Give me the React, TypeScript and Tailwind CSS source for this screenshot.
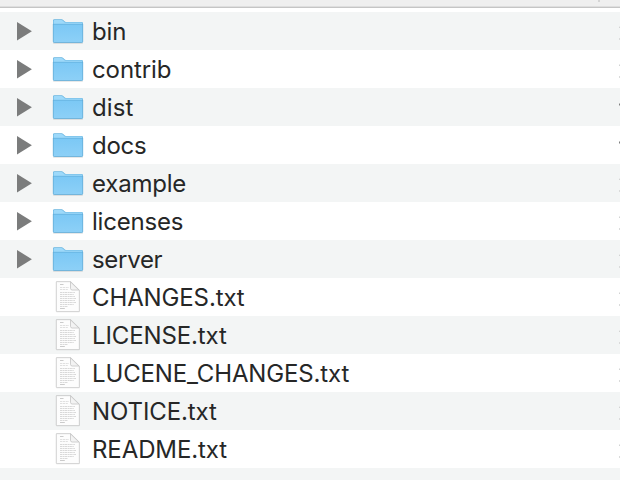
type Entry = { name: string; kind: 'folder' | 'file'; tracking: string; edge: 'curve' | 'flag' };

const entries: Entry[] = [
  { name: 'bin', kind: 'folder', tracking: 'tracking-[-0.1px]', edge: 'curve' },
  { name: 'contrib', kind: 'folder', tracking: 'tracking-[-0.1px]', edge: 'curve' },
  { name: 'dist', kind: 'folder', tracking: 'tracking-[0.1px]', edge: 'flag' },
  { name: 'docs', kind: 'folder', tracking: 'tracking-[-0.3px]', edge: 'flag' },
  { name: 'example', kind: 'folder', tracking: 'tracking-[-0.2px]', edge: 'curve' },
  { name: 'licenses', kind: 'folder', tracking: 'tracking-[-0.2px]', edge: 'curve' },
  { name: 'server', kind: 'folder', tracking: 'tracking-[-0.3px]', edge: 'curve' },
  { name: 'CHANGES.txt', kind: 'file', tracking: 'tracking-[-0.12px]', edge: 'curve' },
  { name: 'LICENSE.txt', kind: 'file', tracking: 'tracking-[-0.12px]', edge: 'curve' },
  { name: 'LUCENE_CHANGES.txt', kind: 'file', tracking: 'tracking-[-0.15px]', edge: 'curve' },
  { name: 'NOTICE.txt', kind: 'file', tracking: 'tracking-[-0.1px]', edge: 'curve' },
  { name: 'README.txt', kind: 'file', tracking: 'tracking-[-0.1px]', edge: 'curve' },
];

function Disclosure() {
  return (
    <svg width="16" height="20" viewBox="0 0 16 20" aria-hidden="true">
      <path d="M1 1v18.500L15.900 10.200z" fill="#7b7c7c" />
    </svg>
  );
}

function FolderIcon() {
  return (
    <svg width="32" height="38" viewBox="0 0 32 38" aria-hidden="true">
      <defs>
        <linearGradient id="folder-front" x1="0" y1="0" x2="0" y2="1">
          <stop offset="0" stopColor="#7bc8f5" />
          <stop offset="1" stopColor="#8dd0f7" />
        </linearGradient>
      </defs>
      <path d="M1.200 30h29.600v1.700H1.200z" fill="#000" opacity=".13" />
      <path d="M1 12V8.600Q1 7.200 2.400 7.200H9.600Q10.500 7.200 11.200 8L12.500 9.300Q13 9.900 14 9.900H29.600Q31 9.900 31 11.300V29H1z" fill="#68b5e0" />
      <path d="M1.600 12V8.900Q1.600 7.900 2.600 7.900H9.500Q10.200 7.900 10.800 8.500L12.200 10Q12.800 10.600 13.800 10.600H29.400Q30.400 10.600 30.400 11.600V13H1.600z" fill="#9dd9fa" />
      <path d="M1 12H31V29.500Q31 30.800 29.700 30.800H2.300Q1 30.800 1 29.500z" fill="url(#folder-front)" />
      <path d="M1 12.300H31" stroke="#64b2df" strokeWidth=".8" />
      <path d="M1.300 12V29.400Q1.300 30.500 2.400 30.500H29.600Q30.700 30.500 30.700 29.400V12" fill="none" stroke="#60a9d2" strokeWidth=".7" />
    </svg>
  );
}

function FileIcon() {
  return (
    <svg width="26" height="38" viewBox="0 0 26 38" aria-hidden="true">
      <path d="M.8 4Q.8 3 1.800 3H15.500L25 12.300V33.200Q25 34.300 23.900 34.300H1.900Q.8 34.300 .8 33.200z" fill="#000" opacity=".12" />
      <path d="M1.400 4.500Q1.400 3.700 2.200 3.700H15.500L24.300 12.300V32.700Q24.300 33.500 23.500 33.500H2.200Q1.400 33.500 1.400 32.700z" fill="#fdfdfd" stroke="#c4c4c4" strokeWidth=".6" />
      <path d="M15.500 3.900V10.300Q15.500 12 17.200 12H23.900z" fill="#f3f3f3" stroke="#c4c4c4" strokeWidth=".8" />
      <g fill="none" stroke="#a3a3a3" strokeWidth=".8">
        <path d="M5 6.500h3.500" opacity=".7" />
        <path d="M5 9.500h9M5 11.500h8" strokeDasharray="2.200 .6" opacity=".4" />
        <path d="M5 14.500h15M5 16.500h14M5 18.500h15M5 20.500h16M5 22.500h15M5 24.500h16M5 26.500h14M5 28.500h8" strokeDasharray="2.500 .5 1.300 .4" opacity=".5" />
        <path d="M5 30.500h4.800" opacity=".7" />
      </g>
    </svg>
  );
}

// The date column starts at the last visible pixel of every row.
function EdgeMark({ edge }: { edge: Entry['edge'] }) {
  return edge === 'flag' ? (
    <div className="flex h-full w-px flex-col pt-[15px]">
      <i className="h-px bg-[#bcbdbd]" />
      <i className="h-px bg-[#7f8080]" />
      <i className="h-px bg-[#bcbdbd]" />
    </div>
  ) : (
    <div className="flex h-full w-px flex-col pt-[14px]">
      <i className="h-px bg-[#e8e9e9]" />
      <i className="h-px bg-[#d2d3d3]" />
      <i className="mt-[10px] h-[2px] bg-[#dadbdb]" />
    </div>
  );
}

function Row({ entry }: { entry: Entry }) {
  return (
    <li className="flex h-[38px] items-center odd:bg-[#f3f5f5]">
      <div className="w-[52px] shrink-0 pl-4">{entry.kind === 'folder' && <Disclosure />}</div>
      <div className="w-10 shrink-0">
        {entry.kind === 'folder' ? <FolderIcon /> : <div className="pl-[3px]"><FileIcon /></div>}
      </div>
      <span className={`flex-1 whitespace-nowrap pt-[2px] text-[24px] leading-[36px] ${entry.tracking}`}>{entry.name}</span>
      <EdgeMark edge={entry.edge} />
    </li>
  );
}

export default function App() {
  return (
    <main className="flex h-[480px] w-[620px] flex-col overflow-hidden bg-white font-[Inter,sans-serif] text-[#262727]">
      <header className="flex h-2 shrink-0 justify-end border-b border-[#c5c5c5] bg-[#efefef] pr-5 shadow-[inset_0_-1px_0_#dedede]">
        <div className="h-[2px] w-[2px] bg-[#d5d5d5]" />
      </header>
      <ul className="mt-1 shrink-0">
        {entries.map((entry) => (
          <Row key={entry.name} entry={entry} />
        ))}
      </ul>
      <div className="flex-1 bg-[#f3f5f5]" />
    </main>
  );
}
